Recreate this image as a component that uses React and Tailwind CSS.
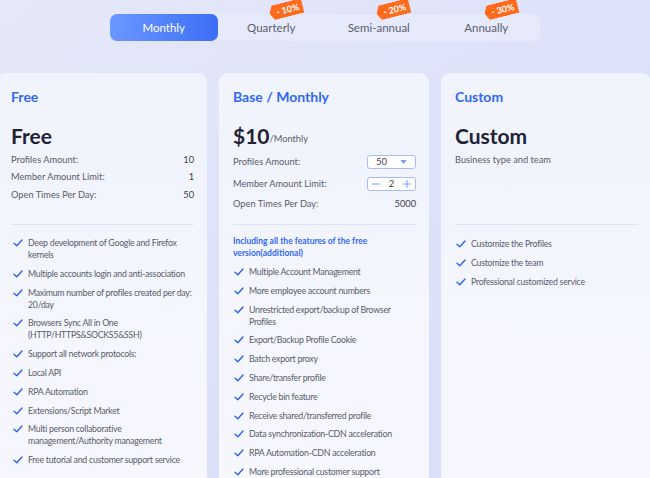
import { useState } from "react";

const tabs = [
  { name: "Monthly" },
  { name: "Quarterly", off: "10%" },
  { name: "Semi-annual", off: "20%" },
  { name: "Annually", off: "30%" },
];

const freeFeatures = [
  "Deep development of Google and Firefox kernels",
  "Multiple accounts login and anti-association",
  "Maximum number of profiles created per day: 20/day",
  "Browsers Sync All in One (HTTP/HTTPS&SOCKS5&SSH)",
  "Support all network protocols:",
  "Local API",
  "RPA Automation",
  "Extensions/Script Market",
  "Multi person collaborative management/Authority management",
  "Free tutorial and customer support service",
];

const baseFeatures = [
  "Multiple Account Management",
  "More employee account numbers",
  "Unrestricted export/backup of Browser Profiles",
  "Export/Backup Profile Cookie",
  "Batch export proxy",
  "Share/transfer profile",
  "Recycle bin feature",
  "Receive shared/transferred profile",
  "Data synchronization-CDN acceleration",
  "RPA Automation-CDN acceleration",
  "More professional customer support",
];

const customFeatures = [
  "Customize the Profiles",
  "Customize the team",
  "Professional customized service",
];

const Check = () => (
  <svg viewBox="0 0 10 8" className="w-[10px] h-[8px] mt-[2px] shrink-0" fill="none">
    <path d="M1 4.2 L3.8 6.8 L9 1" stroke="#2f62ef" strokeWidth="1.4" strokeLinecap="round" strokeLinejoin="round" />
  </svg>
);

const FeatureList = ({ items }) => (
  <ul className="flex flex-col gap-[6.8px]">
    {items.map((f) => (
      <li key={f} className="flex items-start gap-[5px] pl-[1px] text-[8.75px] tracking-[-0.25px] leading-[12px] text-[#585c69]">
        <Check />
        <span>{f}</span>
      </li>
    ))}
  </ul>
);

const Row = ({ label, children, h = "h-[17.5px]" }) => (
  <div className={`flex items-center justify-between ${h} text-[9.25px] text-[#585c69]`}>
    <span>{label}</span>
    <span className="text-[#3b3f4a]">{children}</span>
  </div>
);

const Card = ({ title, children, features }) => (
  <div className="w-[210px] shrink-0 rounded-[9px] bg-gradient-to-b from-[#f1f3fd] to-[#f7f8fe] pl-[14px] pr-[13px] pt-[16px] pb-8">
    <div className="h-[135px]">
      <div className="text-[14px] leading-[15px] font-bold text-[#3069f4]">{title}</div>
      {children}
    </div>
    <div className="border-t border-[#dfe3f3]">{features}</div>
  </div>
);

export default function App() {
  const [tab, setTab] = useState("Monthly");
  const [members, setMembers] = useState(2);

  return (
    <div
      className="w-[650px] h-[478px] overflow-hidden bg-gradient-to-br from-[#e6e8f8] via-[#dde2fa] to-[#d9dffa]"
      style={{ fontFamily: 'Lato, "Noto Sans", sans-serif' }}
    >
      <div className="pt-[14px]">
        <div className="mx-auto flex w-[430px] h-[27px] rounded-[7px] bg-[#e7eafb]">
          {tabs.map((t) => (
            <button
              key={t.name}
              onClick={() => setTab(t.name)}
              className={`relative flex-1 flex items-center justify-center rounded-[7px] text-[11.5px] ${
                tab === t.name
                  ? "bg-gradient-to-r from-[#6b97ff] to-[#3c6ef6] text-white"
                  : "text-[#5a5f6e]"
              }`}
            >
              {t.name}
              {t.off && (
                <span className="absolute left-[51px] top-[-12px] h-[15px] pr-[4px] pl-[7px] bg-[#ff6a1c] text-white text-[9px] leading-[15px] font-bold rotate-[-14deg] [clip-path:polygon(4px_0,100%_0,100%_100%,4px_100%,0_50%)]">
                  -{" "}{t.off}
                </span>
              )}
            </button>
          ))}
        </div>
      </div>

      <div className="mt-[32px] ml-[-3px] flex gap-[12px]">
        <Card
          title="Free"
          features={
            <div className="pt-[12px] pl-[1px]">
              <FeatureList items={freeFeatures} />
            </div>
          }
        >
          <div className="mt-[20px] text-[21px] leading-[24px] font-bold text-[#1f2232]">Free</div>
          <div className="mt-[3px]">
            <Row label="Profiles Amount:">10</Row>
            <Row label="Member Amount Limit:">1</Row>
            <Row label="Open Times Per Day:">50</Row>
          </div>
        </Card>

        <Card
          title="Base / Monthly"
          features={
            <div className="pt-[10px]">
              <div className="mb-[7px] text-[8.5px] leading-[12px] font-bold text-[#3069f4]">
                Including all the features of the free version(additional)
              </div>
              <FeatureList items={baseFeatures} />
            </div>
          }
        >
          <div className="mt-[20px] flex items-end leading-[24px] text-[#1f2232]">
            <span className="text-[21px] font-bold">$10</span>
            <span className="text-[9.25px] leading-[18px] text-[#585c69]">/Monthly</span>
          </div>
          <div className="mt-[3px]">
            <Row label="Profiles Amount:" h="h-[22px]">
              <span className="flex items-center justify-between w-[49px] h-[14px] px-[8px] rounded-[3px] border border-[#a8bcf6] bg-white text-[9.5px]">
                50
                <svg viewBox="0 0 8 5" className="w-[7px] h-[4px]">
                  <path d="M0 0 H8 L4 5 Z" fill="#7e9cf2" />
                </svg>
              </span>
            </Row>
            <Row label="Member Amount Limit:" h="h-[22px]">
              <span className="flex items-center justify-between w-[49px] h-[14px] px-[4px] rounded-[3px] border border-[#a8bcf6] bg-white text-[9.5px]">
                <button onClick={() => setMembers(Math.max(1, members - 1))} className="leading-none">
                  <svg viewBox="0 0 8 8" className="w-[8px] h-[8px]"><path d="M0 4 H8" stroke="#7e9cf2" strokeWidth="1" /></svg>
                </button>
                {members}
                <button onClick={() => setMembers(members + 1)} className="leading-none">
                  <svg viewBox="0 0 8 8" className="w-[8px] h-[8px]"><path d="M0 4 H8 M4 0 V8" stroke="#7e9cf2" strokeWidth="1" /></svg>
                </button>
              </span>
            </Row>
            <Row label="Open Times Per Day:" h="h-[18px]">5000</Row>
          </div>
        </Card>

        <Card
          title="Custom"
          features={
            <div className="pt-[13px]">
              <FeatureList items={customFeatures} />
            </div>
          }
        >
          <div className="mt-[20px] text-[21px] leading-[24px] font-bold text-[#1f2232]">Custom</div>
          <div className="mt-[3px] h-[17.5px] flex items-center text-[9.25px] text-[#585c69]">
            Business type and team
          </div>
        </Card>
      </div>
    </div>
  );
}
